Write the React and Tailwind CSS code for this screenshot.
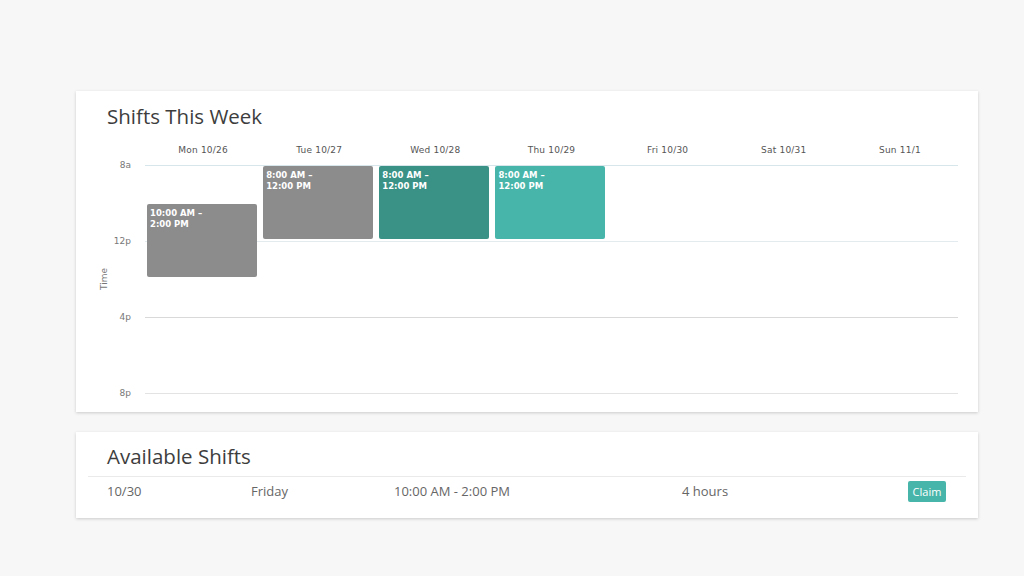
import React from 'react';

const days = ['Mon 10/26', 'Tue 10/27', 'Wed 10/28', 'Thu 10/29', 'Fri 10/30', 'Sat 10/31', 'Sun 11/1'];

const COL = 813 / 7;
const HOUR = 19;

const shifts = [
  { day: 0, start: 10, end: 14, label: ['10:00 AM –', '2:00 PM'], color: 'bg-[#8c8c8c]' },
  { day: 1, start: 8, end: 12, label: ['8:00 AM –', '12:00 PM'], color: 'bg-[#8c8c8c]' },
  { day: 2, start: 8, end: 12, label: ['8:00 AM –', '12:00 PM'], color: 'bg-[#3a9185]' },
  { day: 3, start: 8, end: 12, label: ['8:00 AM –', '12:00 PM'], color: 'bg-[#47b5a9]' },
];

const ticks = [
  { label: '8a', y: 0, line: 'bg-[#d6e6ea]' },
  { label: '12p', y: 76, line: 'bg-[#e3ebee]' },
  { label: '4p', y: 152, line: 'bg-[#d9d9d9]' },
  { label: '8p', y: 228, line: 'bg-[#e3e3e3]' },
];

export default function App() {
  return (
    <div className="min-h-screen bg-[#f7f7f7] pt-[91px] px-[76px] font-['Open_Sans',sans-serif]">
      <div className="w-[902px] h-[321px] bg-white shadow-[0_1px_3px_rgba(0,0,0,0.18)]">
        <h2 className="pl-[31px] pt-[11px] text-[20.5px] leading-[28px] text-[#3d3d3d]">Shifts This Week</h2>
        <div className="flex mt-[12px]">
          <div className="w-[69px] shrink-0" />
          <div className="flex w-[813px] h-[16px] font-['DejaVu_Sans',sans-serif] text-[9px] tracking-[0.2px] leading-[16px] text-[#555]">
            {days.map((d) => (
              <div key={d} className="flex-1 text-center">{d}</div>
            ))}
          </div>
        </div>
        <div className="flex mt-[7px]">
          <div className="relative w-[69px] h-[229px] shrink-0 font-['DejaVu_Sans',sans-serif] text-[9px] text-[#777]">
            {ticks.map((t) => (
              <div key={t.label} className="absolute right-[14px] leading-[12px]" style={{ top: t.y - 6 }}>{t.label}</div>
            ))}
            <div className="absolute left-[28px] top-[114px] -translate-x-1/2 -translate-y-1/2 -rotate-90 leading-[10px]">Time</div>
          </div>
          <div className="relative w-[813px] h-[229px]">
            {ticks.map((t) => (
              <div key={t.label} className={`absolute left-0 right-0 h-px ${t.line}`} style={{ top: t.y }} />
            ))}
            {shifts.map((s) => (
              <div
                key={s.day}
                className={`absolute rounded-[2px] px-[3px] pt-[4px] font-['DejaVu_Sans',sans-serif] font-bold text-[8.5px] leading-[11px] text-white ${s.color}`}
                style={{ left: s.day * COL + 2, width: 110, top: (s.start - 8) * HOUR + 1, height: (s.end - s.start) * HOUR - 3 }}
              >
                <div>{s.label[0]}</div>
                <div>{s.label[1]}</div>
              </div>
            ))}
          </div>
        </div>
      </div>

      <div className="w-[902px] h-[86px] mt-[20px] bg-white shadow-[0_1px_3px_rgba(0,0,0,0.18)]">
        <h2 className="pl-[31px] pt-[10px] text-[20.5px] leading-[28px] text-[#3d3d3d]">Available Shifts</h2>
        <div className="mx-[12px] mt-[6px] h-px bg-[#eaeaea]" />
        <div className="flex items-center h-[29px] pl-[31px] pr-[32px] text-[13px] text-[#666]">
          <div className="w-[144px]">10/30</div>
          <div className="w-[143px]">Friday</div>
          <div className="w-[288px]">10:00 AM - 2:00 PM</div>
          <div className="flex-1">4 hours</div>
          <button className="w-[38px] h-[21px] rounded-[2px] bg-[#47b5a9] text-white text-[11px] leading-[21px] text-center">Claim</button>
        </div>
      </div>
    </div>
  );
}
